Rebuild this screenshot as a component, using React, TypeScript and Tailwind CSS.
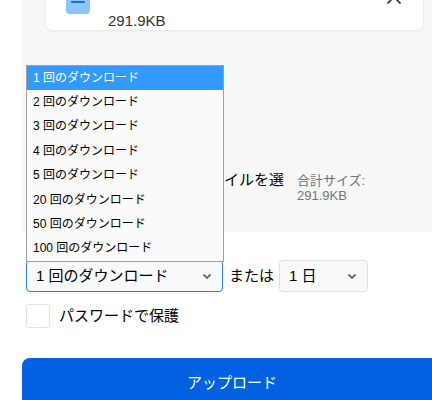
const options = ["1", "2", "3", "4", "5", "20", "50", "100"];

function Chevron() {
  return (
    <svg width="10" height="7" viewBox="0 0 10 7" className="shrink-0">
      <polyline points="1.5,1.5 5,5 8.5,1.5" fill="none" stroke="#6b6b6b" strokeWidth="1.8" />
    </svg>
  );
}

export default function App() {
  return (
    <div
      className="relative w-[432px] h-[400px] overflow-hidden bg-white pl-[22px]"
      style={{ fontFamily: '"Liberation Sans", "Noto Sans CJK JP", sans-serif' }}
    >
      {/* upload panel */}
      <div className="w-[430px] h-[232px] bg-[#f7f7f7] pl-[24px] flex flex-col">
        <div className="-mt-[30px] h-[60px] w-[377px] bg-white rounded-[6px] shadow-[0_1px_3px_rgba(0,0,0,0.08)] flex items-start pl-[20px] pr-[20px] pt-[20px]">
          <div className="w-[24px] h-[24px] rounded-[4px] bg-[#8ec5ff] flex items-center justify-center">
            <div className="w-[14px] h-[2.5px] bg-[#1a6fd8] rounded-full" />
          </div>
          <div className="ml-[18px] flex-1 text-[15px] leading-[17px] text-[#333]">
            <div className="invisible">file.zip</div>
            <div className="mt-[5px]">291.9KB</div>
          </div>
          <svg width="16" height="10" viewBox="0 0 16 10" className="mt-[5px] mr-[1px]">
            <polyline points="1.5,8.5 8,2 14.5,8.5" fill="none" stroke="#444" strokeWidth="1.8" />
          </svg>
        </div>
        <div className="mt-[140px] flex items-start">
          <div className="ml-[148px] w-[92px] text-[15px] leading-[20px] text-black">ファイルを選択</div>
          <div className="ml-[11px] text-[13px] leading-[15px] text-[#6c757d] pt-[3px]">
            合計サイズ:
            <br />
            291.9KB
          </div>
        </div>
      </div>

      {/* options */}
      <div className="mt-[28px] pl-[4px] flex items-center">
        <div className="w-[197px] h-[32px] rounded-[4px] border border-[#2f7ff2] bg-[#f8f9fa] flex items-center justify-between pl-[9px] pr-[10px]">
          <span className="text-[15px] text-black">1 回のダウンロード</span>
          <Chevron />
        </div>
        <span className="ml-[6px] text-[15px] text-black">または</span>
        <div className="ml-[5px] w-[89px] h-[32px] rounded-[4px] border border-[#dee2e6] bg-[#f8f9fa] flex items-center justify-between pl-[9px] pr-[10px]">
          <span className="text-[15px] text-black">1 日</span>
          <Chevron />
        </div>
      </div>

      <div className="mt-[12px] pl-[4px] flex items-center">
        <div className="w-[24px] h-[24px] rounded-[3px] border border-[#dee2e6] bg-white" />
        <span className="ml-[9px] text-[15px] text-black">パスワードで保護</span>
      </div>

      <button
        type="button"
        className="mt-[30px] w-[420px] h-[50px] rounded-t-[8px] bg-[#0062e0] text-white text-[15px] pb-[1px] flex items-start justify-center pt-[14px]"
      >
        アップロード
      </button>

      {/* open native dropdown */}
      <div className="absolute left-[26px] top-[65px] w-[198px] border border-[#a0a0a0] bg-[#fafafa] text-[12px]">
        {options.map((n, i) => (
          <div
            key={n}
            className={
              i === 0
                ? "h-[24px] leading-[24px] pl-[6px] bg-[#3399ff] text-white"
                : "h-[24.4px] leading-[24px] pl-[6px] text-black"
            }
          >
            {n} 回のダウンロード
          </div>
        ))}
      </div>
    </div>
  );
}
